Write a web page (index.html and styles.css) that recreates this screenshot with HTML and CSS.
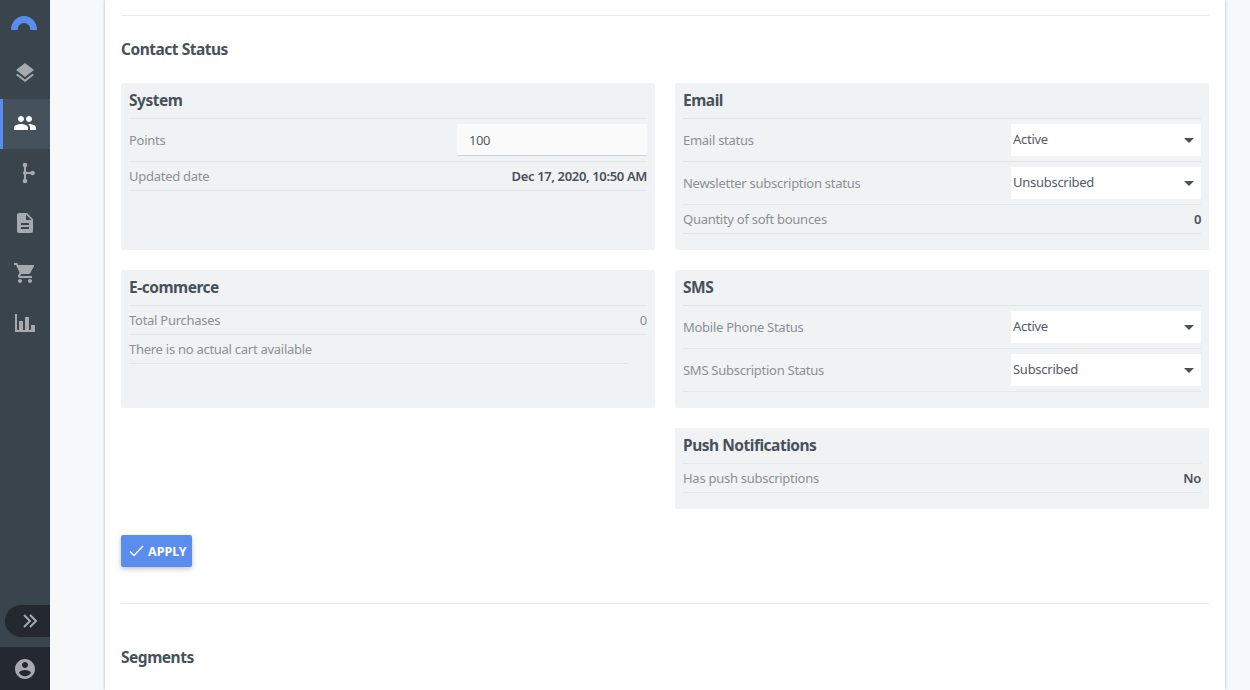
FILE: index.html
```html
<!DOCTYPE html>
<html lang="en">
  <head>
    <meta charset="utf-8" />
    <title>Contact Status</title>
    <link rel="stylesheet" href="styles.css">
  </head>
  <body>
    <div class="app">
      <nav class="sidebar">
        <div class="sidebar__logo">
          <svg width="26" height="14" viewBox="0 0 26 14"><path d="M0 14A13 14 0 0 1 26 14H19.500A6.500 7 0 0 0 6.500 14Z" fill="#5b8def"/></svg>
        </div>
        <a class="sidebar__item">
          <svg class="sidebar__icon" viewBox="0 0 24 24"><path d="M11.99 18.54l-7.37-5.73L3 14.07l9 7 9-7-1.63-1.27-7.38 5.74zM12 16l7.36-5.73L21 9l-9-7-9 7 1.63 1.27L12 16z"/></svg>
        </a>
        <a class="sidebar__item sidebar__item--active">
          <svg class="sidebar__icon" viewBox="0 0 24 24"><path d="M16 11c1.66 0 2.99-1.34 2.99-3S17.66 5 16 5c-1.66 0-3 1.34-3 3s1.34 3 3 3zm-8 0c1.66 0 2.99-1.34 2.99-3S9.66 5 8 5C6.34 5 5 6.34 5 8s1.34 3 3 3zm0 2c-2.33 0-7 1.17-7 3.5V19h14v-2.5c0-2.33-4.67-3.5-7-3.5zm8 0c-.29 0-.62.02-.97.05 1.16.84 1.97 1.97 1.97 3.45V19h6v-2.5c0-2.33-4.67-3.5-7-3.5z"/></svg>
        </a>
        <a class="sidebar__item">
          <svg class="sidebar__icon" viewBox="0 0 24 24"><path d="M11 4h2v16h-2zM12 11h7v2h-7z"/><circle cx="12" cy="4" r="2.300"/><circle cx="12" cy="20" r="2.300"/><circle cx="12" cy="12" r="2"/><circle cx="19.500" cy="12" r="2.300"/></svg>
        </a>
        <a class="sidebar__item">
          <svg class="sidebar__icon" viewBox="0 0 24 24"><path d="M14 2H6c-1.100 0-1.990.9-1.990 2L4 20c0 1.100.89 2 1.990 2H18c1.100 0 2-.9 2-2V8l-6-6zm2 16H8v-2h8v2zm0-4H8v-2h8v2zm-3-5V3.500L18.500 9H13z"/></svg>
        </a>
        <a class="sidebar__item">
          <svg class="sidebar__icon" viewBox="0 0 24 24"><path d="M7 18c-1.100 0-1.990.9-1.990 2S5.900 22 7 22s2-.9 2-2-.9-2-2-2zM1 2v2h2l3.600 7.590-1.350 2.450c-.16.28-.25.61-.25.96 0 1.100.9 2 2 2h12v-2H7.420c-.14 0-.25-.11-.25-.25l.03-.12.9-1.630h7.450c.75 0 1.410-.41 1.750-1.030l3.580-6.490c.08-.14.12-.31.12-.48 0-.55-.45-1-1-1H5.210l-.94-2H1zm16 16c-1.100 0-1.990.9-1.990 2s.89 2 1.990 2 2-.9 2-2-.9-2-2-2z"/></svg>
        </a>
        <a class="sidebar__item">
          <svg class="sidebar__icon" viewBox="0 0 24 24"><path d="M2 3h2v16h2v-9h4v9h2V6h4v13h2v-5h4v7H2z"/></svg>
        </a>
        <div class="sidebar__toggle">
          <svg width="16" height="14" viewBox="0 0 16 14" fill="none" stroke="#a6aaae" stroke-width="2"><path d="M2 1l6 6-6 6M8 1l6 6-6 6"/></svg>
        </div>
        <div class="sidebar__account">
          <svg class="sidebar__icon" viewBox="0 0 24 24"><path d="M12 2C6.480 2 2 6.480 2 12s4.480 10 10 10 10-4.480 10-10S17.520 2 12 2zm0 3c1.660 0 3 1.340 3 3s-1.340 3-3 3-3-1.340-3-3 1.340-3 3-3zm0 14.200c-2.500 0-4.710-1.280-6-3.220.03-1.990 4-3.080 6-3.080 1.990 0 5.970 1.090 6 3.080-1.290 1.940-3.500 3.220-6 3.220z"/></svg>
        </div>
      </nav>

      <main class="content">
        <div class="card">
          <hr class="card__rule" />
          <h2 class="card__title">Contact Status</h2>

          <div class="status-grid">
            <section class="panel">
              <h3 class="panel__title">System</h3>
              <div class="row row--control">
                <span class="row__label">Points</span>
                <input class="field" type="text" value="100" />
              </div>
              <div class="row">
                <span class="row__label">Updated date</span>
                <strong class="row__value">Dec 17, 2020, 10:50 AM</strong>
              </div>
            </section>

            <section class="panel">
              <h3 class="panel__title">Email</h3>
              <div class="row row--control">
                <span class="row__label">Email status</span>
                <div class="dropdown"><select><option>Active</option></select></div>
              </div>
              <div class="row row--control">
                <span class="row__label">Newsletter subscription status</span>
                <div class="dropdown"><select><option>Unsubscribed</option></select></div>
              </div>
              <div class="row">
                <span class="row__label">Quantity of soft bounces</span>
                <strong class="row__value">0</strong>
              </div>
            </section>

            <section class="panel">
              <h3 class="panel__title">E-commerce</h3>
              <div class="row">
                <span class="row__label">Total Purchases</span>
                <span class="row__label">0</span>
              </div>
              <div class="row row--short">
                <span class="row__label">There is no actual cart available</span>
              </div>
            </section>

            <section class="panel">
              <h3 class="panel__title">SMS</h3>
              <div class="row row--control">
                <span class="row__label">Mobile Phone Status</span>
                <div class="dropdown"><select><option>Active</option></select></div>
              </div>
              <div class="row row--control">
                <span class="row__label">SMS Subscription Status</span>
                <div class="dropdown"><select><option>Subscribed</option></select></div>
              </div>
            </section>

            <section class="panel panel--push">
              <h3 class="panel__title">Push Notifications</h3>
              <div class="row">
                <span class="row__label">Has push subscriptions</span>
                <strong class="row__value">No</strong>
              </div>
            </section>
          </div>

          <button class="btn" type="button">
            <svg width="15" height="12" viewBox="0 0 15 12" fill="none" stroke="#fff" stroke-width="1.400"><path d="M1 6.500l4 4L14 1"/></svg>
            APPLY
          </button>

          <hr class="card__rule card__rule--lower" />
          <h2 class="card__title card__title--segments">Segments</h2>
        </div>
      </main>
    </div>
  </body>
</html>
```

FILE: styles.css
```css
* {
	box-sizing: border-box;
}

html, body {
	height: 100%;
	margin: 0;
	overflow: hidden;
}

body {
	font-family: "Noto Sans", "Open Sans", sans-serif;
	font-size: 13px;
	letter-spacing: -0.27px;
	color: #46515b;
	background: #f7f8fa;
}

.app {
	display: flex;
	height: 690px;
}

/* sidebar */
.sidebar {
	width: 50px;
	flex: none;
	display: flex;
	flex-direction: column;
	background: #3a444d;
}
.sidebar__logo {
	height: 49px;
	padding: 16px 0 0 11px;
	line-height: 0;
}
.sidebar__item {
	height: 50px;
	padding-bottom: 2px;
	display: flex;
	align-items: center;
	justify-content: center;
	fill: #a6aaae;
}
.sidebar__item--active {
	background: #46525b;
	border-left: 3px solid #5b8def;
	padding-right: 3px;
	fill: #fff;
}
.sidebar__icon {
	width: 24px;
	height: 24px;
}
.sidebar__toggle {
	height: 32px;
	margin: auto 0 10px 5px;
	padding-left: 17px;
	display: flex;
	align-items: center;
	background: #23292f;
	border-radius: 16px 0 0 16px;
}
.sidebar__account {
	height: 43px;
	display: flex;
	align-items: center;
	justify-content: center;
	background: #23292f;
	fill: #a6aaae;
}

/* main card */
.content {
	flex: 1;
	padding: 0 25px 0 55px;
}
.card {
	height: 690px;
	padding: 15px 16px 0;
	background: #fff;
	box-shadow: 0 0 3px rgba(70, 81, 91, 0.4);
}
.card__rule {
	height: 1px;
	margin: 0;
	border: 0;
	background: #e9eaec;
}
.card__rule--lower {
	margin-top: 36px;
}
.card__title {
	margin: 23px 0 24px;
	font-size: 15.5px;
	line-height: 20px;
	font-weight: 700;
	letter-spacing: -0.48px;
}
.card__title--segments {
	margin-top: 43px;
}

.status-grid {
	display: grid;
	grid-template-columns: 1fr 1fr;
	gap: 20px;
}
.panel {
	padding: 0 8px 16px;
	background: #f1f2f4;
	border-radius: 2px;
}
.panel--push {
	grid-column: 2;
}
.panel__title {
	height: 36px;
	margin: 0;
	font-size: 15.5px;
	line-height: 35px;
	font-weight: 700;
	letter-spacing: -0.48px;
	border-bottom: 1px solid #e3e5e8;
}

.row {
	height: 29px;
	display: flex;
	align-items: center;
	justify-content: space-between;
	border-bottom: 1px solid #e3e5e8;
}
.row--control {
	height: 43px;
}
.row--short {
	margin-right: 19px;
}
.row__label {
	color: #8b9095;
}
.row__value {
	font-weight: 600;
	letter-spacing: -0.35px;
}

.field {
	width: 190px;
	height: 32px;
	padding: 0 12px;
	border: 0;
	border-bottom: 1px solid #cfd2d5;
	background: #fafafa;
	font: inherit;
	letter-spacing: -0.4px;
	color: #525c66;
}

.dropdown {
	position: relative;
	width: 190px;
	height: 32px;
	background: #fff;
}
.dropdown::after {
	content: "";
	position: absolute;
	top: 14px;
	right: 7px;
	border: 5px solid transparent;
	border-top-color: #46515b;
	border-bottom: 0;
}
.dropdown select {
	width: 100%;
	height: 100%;
	padding: 0 2px 2px;
	border: 0;
	background: none;
	appearance: none;
	font: inherit;
	letter-spacing: inherit;
	color: #525c66;
}

.btn {
	display: flex;
	align-items: center;
	gap: 4px;
	width: 71px;
	height: 32px;
	margin-top: 26px;
	padding: 0 0 0 8px;
	border: 0;
	border-radius: 2px;
	background: #5b8def;
	box-shadow: 0 2px 5px rgba(70, 81, 91, 0.35);
	font: 700 12.5px "Noto Sans", sans-serif;
	color: #fff;
}
```
